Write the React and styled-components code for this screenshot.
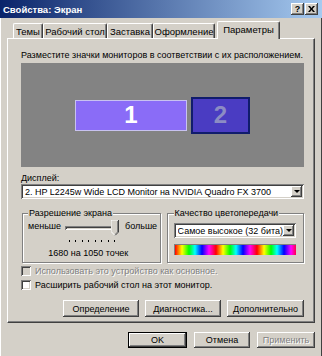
import React from 'react';
import styled, { createGlobalStyle } from 'styled-components';

const GlobalStyle = createGlobalStyle`
  html, body {
    margin: 0;
    padding: 0;
    background: #d4d0c8;
  }
  body {
    font-family: "Liberation Sans", Arial, sans-serif;
    font-size: 9px;
    color: #000;
  }
`;

const raised = `
  box-shadow: inset -1px -1px #404040, inset 1px 1px #ffffff,
    inset -2px -2px #808080, inset 2px 2px #d4d0c8;
`;

const sunken = `
  box-shadow: inset 1px 1px #808080, inset -1px -1px #ffffff,
    inset 2px 2px #404040, inset -2px -2px #d4d0c8;
`;

const Window = styled.div`
  width: 322px;
  height: 356px;
  box-sizing: border-box;
  background: #d4d0c8;
  box-shadow: inset 1px 0 #ffffff, inset -1px 0 #404040;
  display: flex;
  flex-direction: column;
  overflow: hidden;
`;

const TitleBar = styled.div`
  height: 18px;
  flex: none;
  display: flex;
  align-items: center;
  padding: 0 4px 0 3px;
  background: linear-gradient(to right, #0a246a, #a6caf0);
  color: #fff;
  font-weight: bold;
  font-size: 9.5px;
`;

const Title = styled.span`
  flex: 1;
`;

const TitleButton = styled.div`
  width: 13px;
  height: 12px;
  background: #d4d0c8;
  ${raised}
  display: flex;
  align-items: center;
  justify-content: center;
  color: #000;
  font-size: 9px;
  font-weight: bold;
  margin-left: ${p => p.$gap || 0}px;
`;

const Body = styled.div`
  flex: 1;
  display: flex;
  flex-direction: column;
  padding: 3px 7px 0 7px;
`;

const TabRow = styled.div`
  display: flex;
  align-items: flex-end;
  height: 17px;
  padding-left: 6px;
  position: relative;
  z-index: 1;
`;

const Tab = styled.div`
  width: ${p => p.$w}px;
  height: ${p => (p.$active ? 18 : 15)}px;
  margin-bottom: ${p => (p.$active ? -1 : 0)}px;
  margin-left: ${p => (p.$active ? 2 : 0)}px;
  box-sizing: border-box;
  background: #d4d0c8;
  border-top: 1px solid #ffffff;
  border-left: 1px solid #ffffff;
  border-right: 1px solid #404040;
  box-shadow: inset -1px 0 #808080;
  border-radius: 2px 2px 0 0;
  display: flex;
  align-items: center;
  justify-content: center;
  font-size: 9.5px;
  padding-bottom: ${p => (p.$active ? 3 : 0)}px;
`;

const Panel = styled.div`
  height: 285px;
  box-sizing: border-box;
  border-top: 1px solid #ffffff;
  border-left: 1px solid #ffffff;
  border-right: 1px solid #404040;
  border-bottom: 1px solid #404040;
  box-shadow: inset -1px -1px #808080;
  padding: 10px 10px 0 13px;
  display: flex;
  flex-direction: column;
`;

const Line = styled.div`
  height: 12px;
  line-height: 12px;
  white-space: nowrap;
  margin-top: ${p => p.$mt || 0}px;
`;

const Canvas = styled.div`
  margin-top: 2px;
  height: 104px;
  background: #838383;
  display: flex;
  align-items: center;
  justify-content: center;
  gap: 4px;
`;

const Monitor = styled.div`
  width: ${p => p.$w}px;
  height: ${p => p.$h}px;
  box-sizing: border-box;
  background: ${p => (p.$selected ? '#4a3cc2' : '#8a6cf7')};
  border: ${p => (p.$selected ? '2px solid #101c6c' : '1px solid #c8c2f0')};
  color: ${p => (p.$selected ? '#8c8cc4' : '#ffffff')};
  display: flex;
  align-items: center;
  justify-content: center;
  font-size: 24px;
  font-weight: bold;
`;

const Combo = styled.div`
  height: ${p => p.$h || 15}px;
  box-sizing: border-box;
  background: #fff;
  ${sunken}
  display: flex;
  align-items: center;
  padding: 2px 2px 2px 4px;
  margin: ${p => p.$m || '0'};
`;

const ComboText = styled.span`
  flex: 1;
  white-space: nowrap;
  overflow: hidden;
`;

const ComboArrow = styled.div`
  width: 11px;
  align-self: stretch;
  background: #d4d0c8;
  ${raised}
  display: flex;
  align-items: center;
  justify-content: center;
  &::after {
    content: '';
    border-left: 3px solid transparent;
    border-right: 3px solid transparent;
    border-top: 3px solid #000;
  }
`;

const GroupRow = styled.div`
  display: flex;
  gap: 6px;
  margin-top: 8px;
  padding-left: 1px;
`;

const Group = styled.div`
  width: ${p => p.$w}px;
  height: 50px;
  margin-top: 6px;
  box-sizing: border-box;
  border: 1px solid #808080;
  box-shadow: 1px 1px 0 #ffffff, inset 1px 1px 0 #ffffff;
  display: flex;
  flex-direction: column;
`;

const Legend = styled.div`
  align-self: flex-start;
  margin: -7px 0 0 ${p => p.$ml || 5}px;
  padding: 0 1px;
  height: 12px;
  line-height: 12px;
  background: #d4d0c8;
`;

const SliderRow = styled.div`
  display: flex;
  height: 17px;
  margin-top: 1px;
  padding-left: 5px;
`;

const SliderLabel = styled.span`
  width: ${p => p.$w || 'auto'};
  line-height: 12px;
  margin-left: ${p => p.$ml || 0}px;
  white-space: nowrap;
`;

const Slider = styled.div`
  width: 58px;
  position: relative;
`;

const Track = styled.div`
  margin: 6px 0 0 2px;
  width: 50px;
  height: 4px;
  box-sizing: border-box;
  ${sunken}
`;

const Thumb = styled.svg`
  position: absolute;
  left: 48px;
  top: 0;
`;

const Ticks = styled.div`
  display: flex;
  justify-content: space-between;
  width: 46px;
  height: 3px;
  margin: 3px 0 0 46px;
`;

const Tick = styled.span`
  width: 1px;
  height: 2px;
  background: #000;
`;

const CenterText = styled.div`
  text-align: center;
  line-height: 12px;
  margin-top: 4px;
  padding-right: 6px;
`;

const ColorBar = styled.div`
  height: 11px;
  margin: 6px 7px 0 6px;
  box-sizing: border-box;
  border-top: 1px solid #808080;
  border-left: 1px solid #808080;
  background: repeating-linear-gradient(
    to right,
    #ff0000 0px,
    #ffff00 7px,
    #00ff00 14px,
    #00ffff 20px,
    #0000ff 27px,
    #ff00ff 34px,
    #ff0000 41px
  );
`;

const CheckRow = styled.div`
  display: flex;
  align-items: center;
  height: 12px;
  gap: 4px;
  margin-top: ${p => p.$mt || 0}px;
  color: ${p => (p.$disabled ? '#808080' : '#000')};
  text-shadow: ${p => (p.$disabled ? '1px 1px 0 #ffffff' : 'none')};
`;

const Box = styled.span`
  width: 10px;
  height: 10px;
  box-sizing: border-box;
  background: ${p => (p.$disabled ? '#d4d0c8' : '#ffffff')};
  ${sunken}
`;

const ButtonRow = styled.div`
  display: flex;
  justify-content: flex-end;
  gap: ${p => p.$gap || 6}px;
  margin-top: ${p => p.$mt || 0}px;
`;

const Button = styled.div`
  width: ${p => p.$w}px;
  height: ${p => p.$h}px;
  box-sizing: border-box;
  background: #d4d0c8;
  ${raised}
  ${p => p.$default && 'border: 1px solid #000;'}
  display: flex;
  align-items: center;
  justify-content: center;
  white-space: nowrap;
  color: ${p => (p.$disabled ? '#808080' : '#000')};
  text-shadow: ${p => (p.$disabled ? '1px 1px 0 #ffffff' : 'none')};
`;

const tabs = [
  { label: 'Темы', w: 30 },
  { label: 'Рабочий стол', w: 64 },
  { label: 'Заставка', w: 46 },
  { label: 'Оформление', w: 62 },
  { label: 'Параметры', w: 63, active: true },
];

export default function App() {
  return (
    <>
      <GlobalStyle />
      <Window>
        <TitleBar>
          <Title>Свойства: Экран</Title>
          <TitleButton>?</TitleButton>
          <TitleButton $gap={1}>
            <svg width="7" height="6" viewBox="0 0 7 6">
              <path d="M0 0h2l1.5 2 1.5-2h2L4.5 3 7 6H5L3.5 4 2 6H0l2.5-3z" fill="#000" />
            </svg>
          </TitleButton>
        </TitleBar>
        <Body>
          <TabRow>
            {tabs.map(t => (
              <Tab key={t.label} $w={t.w} $active={t.active}>
                {t.label}
              </Tab>
            ))}
          </TabRow>
          <Panel>
            <Line>Разместите значки мониторов в соответствии с их расположением.</Line>
            <Canvas>
              <Monitor $w={112} $h={31}>1</Monitor>
              <Monitor $w={59} $h={37} $selected>2</Monitor>
            </Canvas>
            <Line $mt={5}>Дисплей:</Line>
            <Combo>
              <ComboText>2. HP L2245w Wide LCD Monitor на NVIDIA Quadro FX 3700</ComboText>
              <ComboArrow />
            </Combo>
            <GroupRow>
              <Group $w={140}>
                <Legend>Разрешение экрана</Legend>
                <SliderRow>
                  <SliderLabel $w="35px">меньше</SliderLabel>
                  <Slider>
                    <Track />
                    <Thumb width="8" height="16" viewBox="0 0 8 16">
                      <path d="M0 0h8v12l-4 4-4-4z" fill="#d4d0c8" />
                      <path d="M0 12V0h7" fill="none" stroke="#fff" />
                      <path d="M7.5 0v12l-3.5 3.5" fill="none" stroke="#404040" />
                      <path d="M6.5 1v11l-2.5 2.5" fill="none" stroke="#808080" />
                      <path d="M0.5 12l3.5 3.5" fill="none" stroke="#fff" />
                    </Thumb>
                  </Slider>
                  <SliderLabel $ml={4}>больше</SliderLabel>
                </SliderRow>
                <Ticks>
                  {Array.from({ length: 8 }).map((_, i) => (
                    <Tick key={i} />
                  ))}
                </Ticks>
                <CenterText>1680 на 1050 точек</CenterText>
              </Group>
              <Group $w={138}>
                <Legend $ml={6}>Качество цветопередачи</Legend>
                <Combo $m="4px 7px 0 6px">
                  <ComboText>Самое высокое (32 бита)</ComboText>
                  <ComboArrow />
                </Combo>
                <ColorBar />
              </Group>
            </GroupRow>
            <CheckRow $mt={2} $disabled>
              <Box $disabled />
              Использовать это устройство как основное.
            </CheckRow>
            <CheckRow $mt={2}>
              <Box />
              Расширить рабочий стол на этот монитор.
            </CheckRow>
            <ButtonRow $mt={9} $gap={6}>
              <Button $w={76} $h={17}>Определение</Button>
              <Button $w={76} $h={17}>Диагностика...</Button>
              <Button $w={77} $h={17}>Дополнительно</Button>
            </ButtonRow>
          </Panel>
          <ButtonRow $mt={9} $gap={7}>
            <Button $w={59} $h={16} $default>OK</Button>
            <Button $w={56} $h={16}>Отмена</Button>
            <Button $w={58} $h={16} $disabled>Применить</Button>
          </ButtonRow>
        </Body>
      </Window>
    </>
  );
}
